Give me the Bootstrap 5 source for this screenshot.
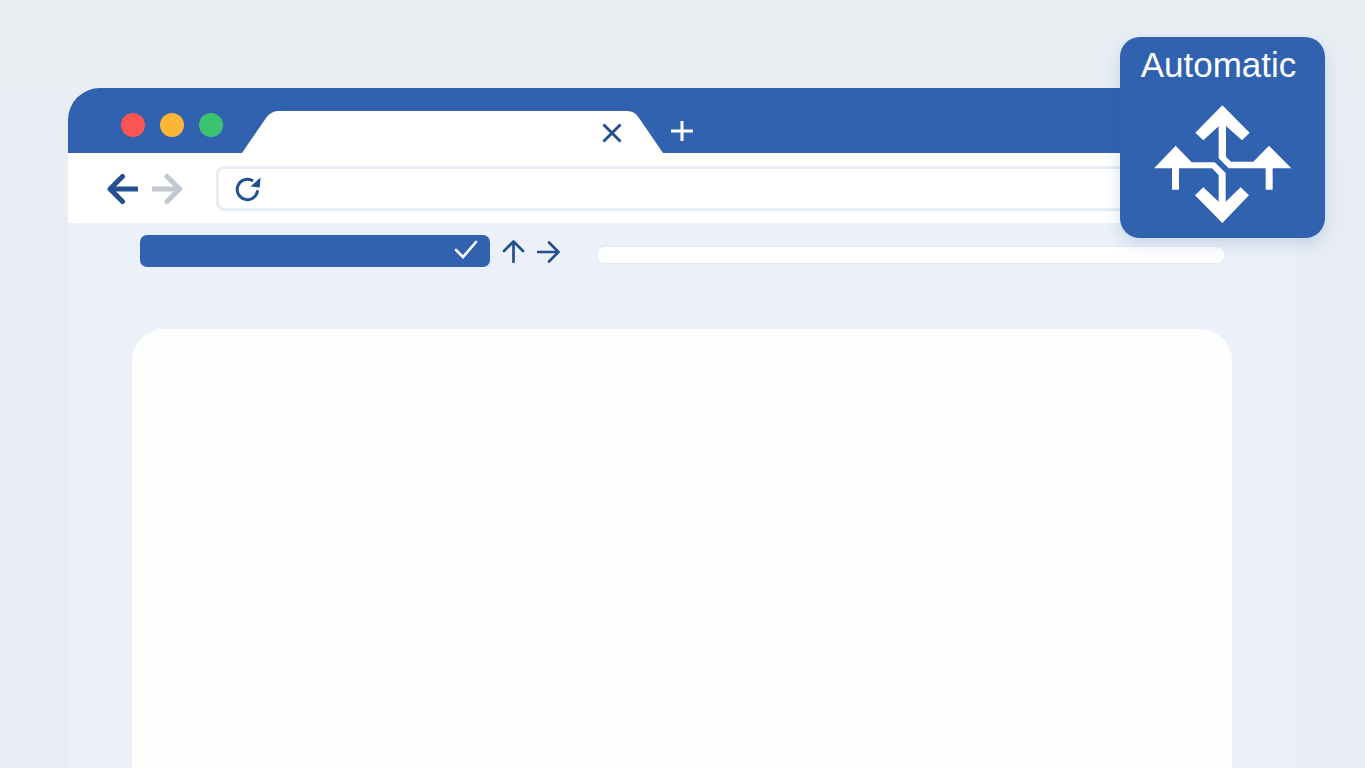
<!DOCTYPE html>
<html lang="en">
<head>
<meta charset="utf-8">
<meta name="viewport" content="width=device-width, initial-scale=1">
<title>Automatic</title>
<link href="https://cdn.jsdelivr.net/npm/bootstrap@5.3.0/dist/css/bootstrap.min.css" rel="stylesheet">
<style>
:root { --brand: #3162b0; --ink: #25508f; --page: #e8edf4; --surface: #ecf1f9; --line: #e6edf4; }
body { background: linear-gradient(#e9eef3, #e8edf5 40%); font-family: "Liberation Sans", Arial, sans-serif; }
.desktop { padding: 88px 69px 0 68px; }
.browser { background: var(--surface); border-radius: 32px 32px 0 0; }
.titlebar { background: var(--brand); height: 65px; padding-left: 53px; border-radius: 32px 0 0 0; }
.lights { gap: 15px; }
.light-dot { width: 24px; height: 24px; border-radius: 50%; }
.dot-close { background: #fd5352; }
.dot-min { background: #fbb637; }
.dot-max { background: #3cc372; }
.page-tab { width: 421px; height: 42px; margin-left: 19px; }
.tab-face { background: #fff; padding: 2px 5px 0 0; }
.icon-btn { background: none; border: 0; padding: 0; line-height: 0; color: var(--ink); flex: none; }
.icon-btn:disabled { color: #c1c8cf; }
svg { display: block; flex: none; fill: none; stroke: currentColor; }
svg.solid { fill: currentColor; stroke: none; }
.new-tab { color: #fff; margin: 0 0 11px 8px; }
.toolbar { background: #fff; height: 70px; padding: 1px 48px 0 38px; }
.history { gap: 13px; margin-right: 33px; }
.address { height: 45px; border: 3px solid var(--line); border-radius: 8px; padding-left: 16px; }
.address input { box-shadow: none !important; }
.action-row { padding: 12px 72px 0; height: 106px; }
.picker { width: 350px; height: 32px; background: var(--brand); color: #fff; border: 0; border-radius: 7px; padding: 0 12px 2px; }
.arrow-set { gap: 12px; margin: 0 38px 0 12px; height: 32px; }
.search-line { height: 16px; margin-top: 12px; background: #fff; border: 0; border-radius: 6px; outline: 1px solid #e4ebf4; min-width: 0; }
.sheet { background: #fefefe; border-radius: 32px 32px 0 0; margin: 0 64px; }
.auto-tile { top: -51px; right: -29px; width: 205px; height: 201px; background: var(--brand); color: #fff; border: 0; border-radius: 20px; padding: 8px 0 0; box-shadow: 0 6px 16px rgba(49, 98, 176, .2); }
.auto-label { font-size: 35px; line-height: 40px; margin-bottom: 20px; padding-right: 8px; }
</style>
</head>
<body>
<div class="desktop d-flex flex-column min-vh-100">
  <div class="browser position-relative d-flex flex-column flex-grow-1">
    <header class="titlebar d-flex align-items-end">
      <div class="lights d-flex pb-3">
        <span class="light-dot dot-close"></span>
        <span class="light-dot dot-min"></span>
        <span class="light-dot dot-max"></span>
      </div>
      <div class="page-tab d-flex">
        <svg class="solid text-white" width="36" height="42" viewBox="0 0 36 42"><path d="M0 42 24 7Q29 0 37 0V42Z"/></svg>
        <div class="tab-face flex-grow-1 d-flex align-items-center justify-content-end">
          <button class="icon-btn" type="button" aria-label="Close tab">
            <svg width="20" height="20" viewBox="0 0 20 20" stroke-width="3"><path d="m1.500 1.500 17 17m0-17-17 17"/></svg>
          </button>
        </div>
        <svg class="solid text-white" width="36" height="42" viewBox="0 0 36 42"><path d="M-1 0H0Q8 0 12 7L36 42H-1Z"/></svg>
      </div>
      <button class="icon-btn new-tab" type="button" aria-label="New tab">
        <svg width="22" height="22" viewBox="0 0 22 22" stroke-width="3"><path d="M0 11h22M11 1v20"/></svg>
      </button>
    </header>

    <nav class="toolbar d-flex align-items-center" aria-label="Navigation">
      <div class="history d-flex">
        <button class="icon-btn" type="button" aria-label="Back">
          <svg width="32" height="32" viewBox="0 0 32 32" stroke-width="5"><path d="M32 16H4"/><path d="M16.500 3.500 4 16l12.500 12.500" stroke-linecap="round" stroke-linejoin="round"/></svg>
        </button>
        <button class="icon-btn" type="button" aria-label="Forward" disabled>
          <svg width="32" height="32" viewBox="0 0 32 32" stroke-width="5"><path d="M1 16h28"/><path d="m16 3.500 12.500 12.500L16 28.500" stroke-linecap="round" stroke-linejoin="round"/></svg>
        </button>
      </div>
      <div class="address d-flex align-items-center flex-grow-1">
        <button class="icon-btn" type="button" aria-label="Reload">
          <svg width="26" height="26" viewBox="0 0 26 26" stroke-width="3"><path d="M17 4.300A10.200 10.200 0 1 0 22.400 15.500" stroke-linecap="round"/><path d="M25.500 1.500 24.800 11.500 15.500 10.500Z" fill="currentColor" stroke="none"/></svg>
        </button>
        <input class="form-control border-0 bg-transparent py-0" type="text" aria-label="Address">
      </div>
    </nav>

    <div class="action-row d-flex align-items-start">
      <button class="picker d-flex align-items-center justify-content-end" type="button" aria-label="Selected">
        <svg width="24" height="20" viewBox="0 0 24 20" stroke-width="2.600" stroke-linecap="round"><path d="m2 10 7 7L22 2"/></svg>
      </button>
      <div class="arrow-set d-flex align-items-center">
        <button class="icon-btn" type="button" aria-label="Up">
          <svg width="23" height="24" viewBox="0 0 23 24" stroke-width="2.700"><path d="M11.500 23V3M2 12l9.500-9.500L21 12" stroke-linejoin="round" stroke-linecap="round"/></svg>
        </button>
        <button class="icon-btn" type="button" aria-label="Next">
          <svg width="23" height="24" viewBox="0 0 23 24" stroke-width="2.700"><path d="M1 13h20M12 3.500l9.500 9.500-9.500 9.500" stroke-linejoin="round" stroke-linecap="round"/></svg>
        </button>
      </div>
      <input class="search-line flex-grow-1" type="text" aria-label="Search">
    </div>

    <main class="sheet flex-grow-1"></main>

    <button class="auto-tile position-absolute d-flex flex-column align-items-center" type="button">
      <span class="auto-label">Automatic</span>
      <svg class="solid" width="138" height="118" viewBox="42 30 414 354"><path d="M247 31 329 113 306 136 258 93V186L273 200H340L387 152 454 220H398V284H377V220H266L236 190V94L190 136 166 113Z"/><path d="M107 152 155 202H224L257 234V320L302 277 327 301 247 384 165 301 190 277 236 320V240L216 220H117V284H96V220H42Z"/></svg>
    </button>
  </div>
</div>
<script src="https://cdn.jsdelivr.net/npm/bootstrap@5.3.0/dist/js/bootstrap.bundle.min.js"></script>
</body>
</html>
